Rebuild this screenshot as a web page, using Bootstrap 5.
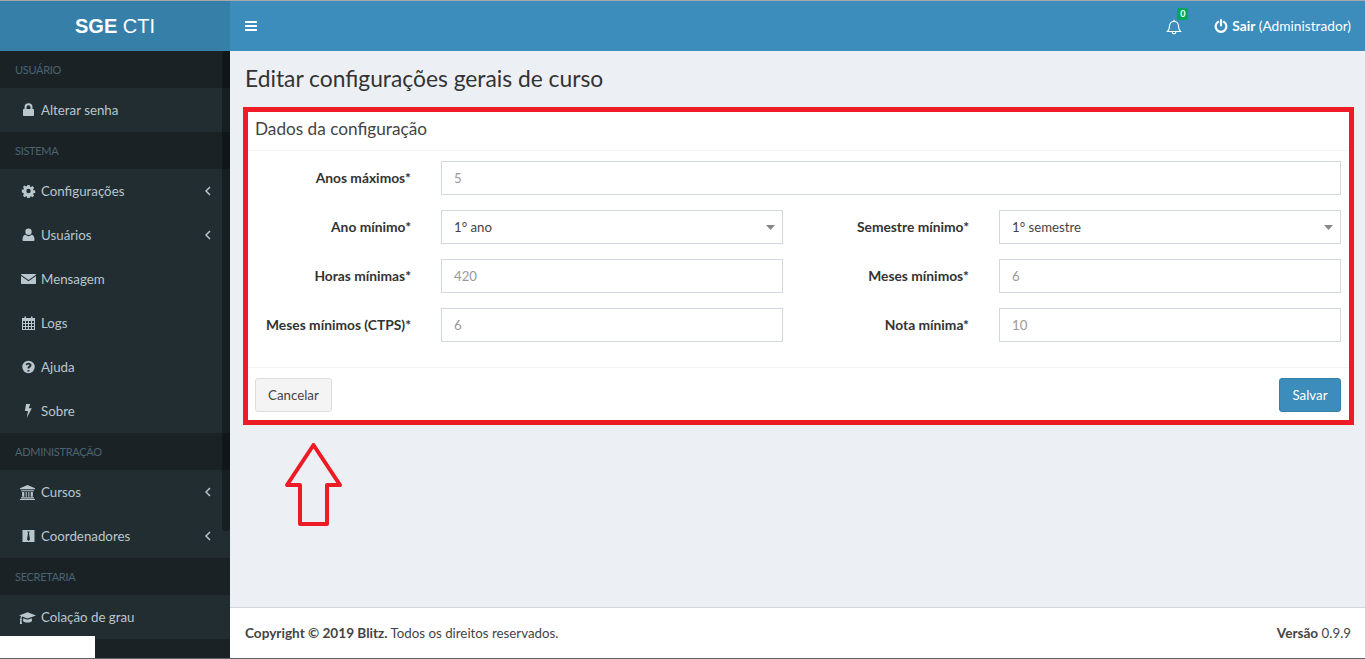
<!DOCTYPE html>
<html lang="pt-BR">
<head>
<meta charset="utf-8">
<title>SGE CTI</title>
<link href="https://cdn.jsdelivr.net/npm/bootstrap@5.3.0/dist/css/bootstrap.min.css" rel="stylesheet">
<style>
html,body{height:100%}
body{margin:0;overflow:hidden;font-family:"Lato","Liberation Sans",sans-serif;font-size:14px;color:#333;background:#ecf0f5}
.shell{height:659px;border-top:1px solid #a9a9a9;border-bottom:1px solid #5a6266;position:relative;display:flex;flex-direction:column;overflow:hidden}
.topbar{height:50px;flex:none;display:flex;background:#3c8dbc;color:#fff}
.brand{width:230px;flex:none;background:#367fa9;text-align:center;line-height:50px;font:20px/50px "Liberation Sans",sans-serif}
.burger{width:42px;display:flex;align-items:center;justify-content:center}
.bell-wrap{position:relative;width:16px;height:16px;margin-right:32px;margin-top:-7px}
.bell-count{position:absolute;left:11px;top:-6px;width:11px;height:12px;background:#00a65a;border-radius:2px;color:#fff;font-size:9px;font-weight:700;line-height:12px;text-align:center}
.logout{margin-right:14px;white-space:nowrap;font-size:13.7px}
.bodyrow{flex:1;display:flex;min-height:0}
.side{width:230px;flex:none;background:#1a2226;position:relative;overflow:hidden}
.side-head{height:37px;padding-left:15px;line-height:37px;font-size:11px;letter-spacing:-.3px;color:#4b646f;text-transform:uppercase}
.side-item{height:44px;background:#222d32;color:#b8c7ce;display:flex;align-items:center;padding:2px 19px 0 21px;font-size:13.3px}
.side-item .ico{width:15px;height:14px;margin:-2px 5px 0 0;flex:none;fill:#b8c7ce}
.side-item .ico.ico-wide{width:17px;height:15px;margin-left:-2px}
.side-item .chev{margin:-2px 0 0 auto;width:6px;height:10px;fill:none;stroke:#b8c7ce;stroke-width:1.5}
.thumb{position:absolute;left:222px;top:0;width:8px;height:480px;background:rgba(0,0,0,.32);border-radius:4px 0 4px 4px}
.patch{position:absolute;left:0;bottom:0;width:95px;height:22px;background:#fff}
.main{flex:1;min-width:0;display:flex;flex-direction:column}
.content{flex:1;padding:0 11px 0 13px;position:relative}
.page-title{font-size:22.8px;font-weight:400;margin:14px 0 0 2px;line-height:26px;color:#333}
.redframe{margin-top:16px;border:5px solid #ed1c24;background:#fff;height:318px}
.frame-head{height:39px;padding-left:7px;border-bottom:1px solid #f4f4f4;font-size:17.2px;line-height:33px;color:#444}
.frame-grid{display:grid;grid-template-columns:153px 342px 156px 342px;column-gap:30px;row-gap:15px;padding:10px 0 25px 10px;border-bottom:1px solid #f4f4f4;height:217px;align-content:start}
.frame-grid label{font-weight:700;text-align:right;line-height:34px;margin:0;font-size:13.8px;color:#333;white-space:nowrap}
.frame-grid .wide{grid-column:2 / 5}
.form-control.fld,.form-select.fld{height:34px;border:1px solid #d2d6de;border-radius:0;padding:6px 12px;font-size:13.2px;color:#999;background-color:#fff;box-shadow:none}
.form-select.fld{color:#444;padding-top:7px;padding-bottom:5px;background-image:url("data:image/svg+xml,%3Csvg xmlns='http://www.w3.org/2000/svg' width='9' height='5'%3E%3Cpath d='M0 0h9L4.500 5z' fill='%23888'/%3E%3C/svg%3E");background-size:9px 5px;background-position:right 7px center}
.frame-foot{display:flex;justify-content:space-between;padding:10px 8px 0 7px}
.btn-cancel,.btn-save{height:34px;border-radius:3px;font-size:13.3px;padding:0 12px;line-height:32px}
.btn-cancel{background:#f4f4f4;border:1px solid #ddd;color:#444}
.btn-save{background:#3c8dbc;border:1px solid #367fa9;color:#fff;min-width:62px}
.arrow-up{position:absolute;left:55px;top:392px;width:58px;height:84px}
.pagefoot{height:51px;flex:none;background:#fff;border-top:1px solid #d2d6de;display:flex;justify-content:space-between;align-items:center;padding:0 14px 0 15px;font-size:13.3px;color:#444}
.pagefoot b{font-size:13.6px}
</style>
</head>
<body>
<svg width="0" height="0" class="d-block" aria-hidden="true">
<symbol id="i-lock" viewBox="0 0 14 14"><path d="M3 6V4.300a4 4 0 0 1 8 0V6h.700a.8.8 0 0 1 .8.8v5.400a.8.8 0 0 1-.8.8H2.300a.8.8 0 0 1-.8-.8V6.800a.8.8 0 0 1 .8-.8zm2 0h4V4.300a2 2 0 0 0-4 0z"/></symbol>
<symbol id="i-cog" viewBox="0 0 14 14"><path fill-rule="evenodd" d="M5.800 1h2.400l.3 1.700 1 .4 1.400-1 1.700 1.700-1 1.400.4 1 1.700.3v2.400l-1.700.3-.4 1 1 1.400-1.700 1.700-1.400-1-1 .4-.3 1.700H5.800l-.3-1.700-1-.4-1.400 1-1.700-1.700 1-1.400-.4-1L.3 8.200V5.800L2 5.500l.4-1-1-1.400 1.700-1.700 1.400 1 1-.4zM7 4.800a2.200 2.200 0 1 0 0 4.400 2.200 2.200 0 0 0 0-4.400z"/></symbol>
<symbol id="i-user" viewBox="0 0 14 14"><circle cx="7" cy="3.800" r="3.200"/><path d="M2 13a1 1 0 0 1-1-1c0-3 .8-5 2.800-5.300a4.800 4.800 0 0 0 6.400 0C12.200 7 13 9 13 12a1 1 0 0 1-1 1z"/></symbol>
<symbol id="i-mail" viewBox="0 0 15 14"><path d="M.7 2h13.600a.7.7 0 0 1 .7.7L7.500 8 0 2.700A.7.7 0 0 1 .7 2zM0 4l7.500 5.300L15 4v7.300a.7.7 0 0 1-.7.7H.7a.7.7 0 0 1-.7-.7z"/></symbol>
<symbol id="i-cal" viewBox="0 0 14 14"><path fill-rule="evenodd" d="M3 .5h1.500V2h5V.5H11V2h2.500v12H.5V2H3zM1.500 5v2h2V5zm3 0v2h2V5zm3 0v2h2V5zm3 0v2h2V5zM1.500 8v2h2V8zm3 0v2h2V8zm3 0v2h2V8zm3 0v2h2V8zM1.500 11v2h2v-2zm3 0v2h2v-2zm3 0v2h2v-2zm3 0v2h2v-2z"/></symbol>
<symbol id="i-help" viewBox="0 0 14 14"><path fill-rule="evenodd" d="M7 .8a6.200 6.200 0 1 1 0 12.400A6.200 6.200 0 0 1 7 .8zM6 10v1.600h2V10zM7 2.700c-1.500 0-2.500.8-2.900 1.800l1.300.9c.3-.6.800-1 1.500-1 .6 0 1 .3 1 .8 0 .4-.3.700-.9 1-.7.400-1 .9-1 1.800v.5h2v-.4c0-.3.2-.5.600-.7.800-.5 1.400-1.100 1.400-2.200 0-1.500-1.400-2.500-3-2.500z"/></symbol>
<symbol id="i-bolt" viewBox="0 0 14 14"><path d="M4.500 0h4.200L7.300 4.200h3L5.300 14l1.200-7H3.400z"/></symbol>
<symbol id="i-bank" viewBox="0 0 15 14"><path fill-rule="evenodd" d="M7.500 0l7 3v1h-14V3zM1.500 5h12v.8h-12zM2.500 6.500h2v4.500h-2zM5.800 6.500h1v4.500h-1zM8.200 6.500h1v4.500h-1zM10.500 6.500h2v4.500h-2zM1.500 11.500h12v1h-12zM.5 13h14v1H.5z"/></symbol>
<symbol id="i-tie" viewBox="0 0 14 14"><path fill-rule="evenodd" d="M1 1h12v12H1zM5.800 2.500l.7 1.700-1 6.300 1.500 1.500 1.500-1.500-1-6.300.7-1.700z"/></symbol>
<symbol id="i-grad" viewBox="0 0 16 14"><path d="M8 2l8 3-8 3-5-1.900c-.4.500-.6 1.200-.7 2 .3.100.5.400.5.700 0 .3-.2.500-.4.700l.4 3.500H.8l.4-3.500A.8.800 0 0 1 .8 8.800c0-.3.200-.6.500-.7.100-1 .4-1.800.8-2.400L0 5zM4 7.700l4 1.500 4-1.500.2 2.300c0 1-1.900 1.800-4.200 1.800S3.800 11 3.800 10z"/></symbol>
</svg>
<div class="shell">
  <header class="topbar">
    <div class="brand"><b>SGE</b> CTI</div>
    <div class="flex-grow-1 d-flex align-items-center">
      <div class="burger"><svg width="12" height="10" viewBox="0 0 12 10" fill="#fff"><rect width="12" height="2" rx=".5"/><rect y="4" width="12" height="2" rx=".5"/><rect y="8" width="12" height="2" rx=".5"/></svg></div>
      <div class="ms-auto d-flex align-items-center">
        <div class="bell-wrap">
          <svg width="16" height="16" viewBox="0 0 16 16" fill="none" stroke="#fff" stroke-width="1.200"><path d="M1.500 12.500c1.300-1.300 2-2.800 2-5.500 0-2.500 1.800-4.500 4.500-4.500s4.500 2 4.500 4.500c0 2.700.7 4.200 2 5.500z"/><path d="M8 .8v1.700M6.200 13c0 1 .8 1.800 1.800 1.800s1.800-.8 1.800-1.800"/></svg>
          <span class="bell-count">0</span>
        </div>
        <div class="logout d-flex align-items-center">
          <svg class="me-1" width="14" height="14" viewBox="0 0 13 13" fill="none" stroke="#fff" stroke-width="2" stroke-linecap="round"><path d="M6.500 1v5"/><path d="M3.800 2.700a5 5 0 1 0 5.400 0"/></svg>
          <span><b>Sair</b> (Administrador)</span>
        </div>
      </div>
    </div>
  </header>
  <div class="bodyrow">
    <aside class="side">
      <div class="side-head">Usuário</div>
      <div class="side-item"><svg class="ico"><use href="#i-lock"/></svg>Alterar senha</div>
      <div class="side-head">Sistema</div>
      <div class="side-item"><svg class="ico"><use href="#i-cog"/></svg>Configurações<svg class="chev" viewBox="0 0 6 10"><path d="M5 1 1 5l4 4"/></svg></div>
      <div class="side-item"><svg class="ico"><use href="#i-user"/></svg>Usuários<svg class="chev" viewBox="0 0 6 10"><path d="M5 1 1 5l4 4"/></svg></div>
      <div class="side-item"><svg class="ico"><use href="#i-mail"/></svg>Mensagem</div>
      <div class="side-item"><svg class="ico"><use href="#i-cal"/></svg>Logs</div>
      <div class="side-item"><svg class="ico"><use href="#i-help"/></svg>Ajuda</div>
      <div class="side-item"><svg class="ico"><use href="#i-bolt"/></svg>Sobre</div>
      <div class="side-head">Administração</div>
      <div class="side-item"><svg class="ico ico-wide"><use href="#i-bank"/></svg>Cursos<svg class="chev" viewBox="0 0 6 10"><path d="M5 1 1 5l4 4"/></svg></div>
      <div class="side-item"><svg class="ico"><use href="#i-tie"/></svg>Coordenadores<svg class="chev" viewBox="0 0 6 10"><path d="M5 1 1 5l4 4"/></svg></div>
      <div class="side-head">Secretaria</div>
      <div class="side-item"><svg class="ico ico-wide"><use href="#i-grad"/></svg>Colação de grau</div>
      <div class="thumb"></div>
      <div class="patch"></div>
    </aside>
    <div class="main">
      <main class="content">
        <h1 class="page-title">Editar configurações gerais de curso</h1>
        <section class="redframe">
          <div class="frame-head">Dados da configuração</div>
          <form class="frame-grid">
            <label>Anos máximos*</label>
            <input class="form-control fld wide" value="5">
            <label>Ano mínimo*</label>
            <select class="form-select fld"><option>1° ano</option></select>
            <label>Semestre mínimo*</label>
            <select class="form-select fld"><option>1° semestre</option></select>
            <label>Horas mínimas*</label>
            <input class="form-control fld" value="420">
            <label>Meses mínimos*</label>
            <input class="form-control fld" value="6">
            <label>Meses mínimos (CTPS)*</label>
            <input class="form-control fld" value="6">
            <label>Nota mínima*</label>
            <input class="form-control fld" value="10">
          </form>
          <div class="frame-foot">
            <button type="button" class="btn btn-cancel">Cancelar</button>
            <button type="button" class="btn btn-save">Salvar</button>
          </div>
        </section>
        <svg class="arrow-up" viewBox="0 0 58 84" fill="none" stroke="#ed1c24" stroke-width="4" stroke-linejoin="round"><path d="M28.500 2 55 42H42V81H15V42H2z"/></svg>
      </main>
      <footer class="pagefoot">
        <span><b>Copyright © 2019 Blitz.</b> Todos os direitos reservados.</span>
        <span><b>Versão</b> 0.9.9</span>
      </footer>
    </div>
  </div>
</div>
</body>
</html>
